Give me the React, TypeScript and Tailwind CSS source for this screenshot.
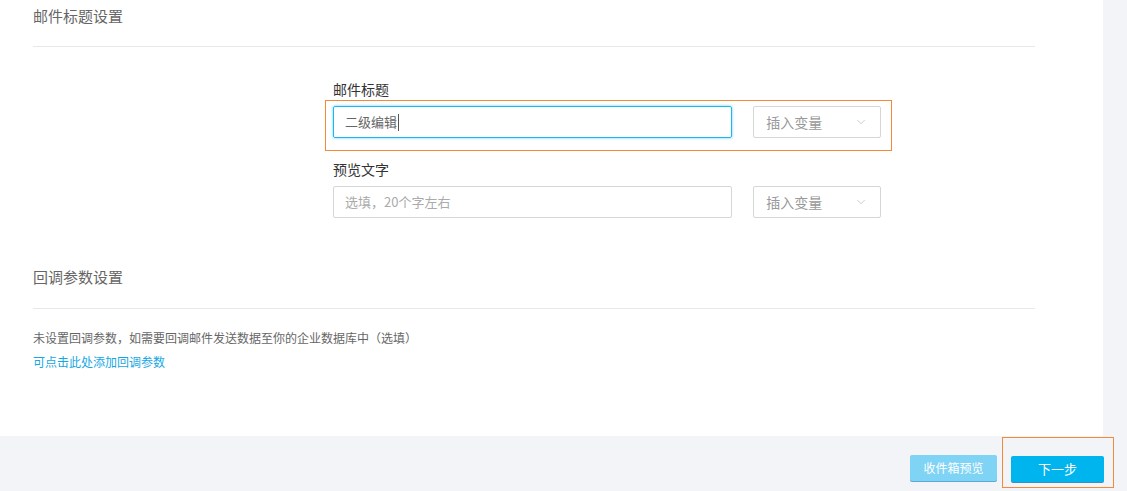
import { ChevronDown } from 'lucide-react';

const font = { fontFamily: '"Noto Sans CJK SC", "Liberation Sans", sans-serif' };

function VarSelect() {
  return (
    <div className="flex h-[32px] w-[128px] items-center justify-between rounded-[2px] border border-[#d6d6d6] bg-white pl-[12px] pr-[12px] text-[14px] text-[#999]">
      <span>插入变量</span>
      <ChevronDown size={14} strokeWidth={1.5} className="text-[#c8c8c8]" />
    </div>
  );
}

export default function App() {
  return (
    <div className="flex h-[491px] w-full flex-col bg-[#f3f4f8]" style={font}>
      <div className="flex">
        <div className="h-[436px] w-[1103px] bg-white pl-[33px] pr-[68px] pt-[6px]">
          <div className="h-[20px] text-[15px] leading-[20px] text-[#666]">邮件标题设置</div>
          <div className="mt-[20px] h-px bg-[#e8e8e8]" />

          <div className="ml-[300px]">
            <div className="mt-[33px] h-[18px] text-[14px] leading-[18px] text-[#333]">邮件标题</div>
            <div className="relative mt-[8px] flex w-[548px] gap-[21px]">
              <div className="flex h-[32px] w-[400px] items-center rounded-[2px] border border-[#1fb6f0] px-[11px] text-[13px] text-[#666] shadow-[0_0_3px_#5fd0ff]">
                <span>二级编辑</span>
                <span className="ml-px h-[17px] w-px bg-[#555]" />
              </div>
              <VarSelect />
              <div className="pointer-events-none absolute -bottom-[13px] -left-[8px] -right-[11px] -top-[6px] border border-[#f5893a]" />
            </div>

            <div className="mt-[22px] h-[18px] text-[14px] leading-[18px] text-[#333]">预览文字</div>
            <div className="mt-[8px] flex w-[548px] gap-[21px]">
              <div className="flex h-[32px] w-[400px] items-center rounded-[2px] border border-[#d6d6d6] px-[11px] text-[13px] text-[#aaa]">
                选填，20个字左右
              </div>
              <VarSelect />
            </div>
          </div>

          <div className="mt-[49px] h-[20px] text-[15px] leading-[20px] text-[#666]">回调参数设置</div>
          <div className="mt-[21px] h-px bg-[#e8e8e8]" />
          <div className="mt-[20px] h-[18px] text-[12px] leading-[18px] text-[#666]">
            未设置回调参数，如需要回调邮件发送数据至你的企业数据库中（选填）
          </div>
          <div className="mt-[6px] h-[18px] text-[12px] leading-[18px] text-[#16a7e3]">可点击此处添加回调参数</div>
        </div>
        <div className="flex-1" />
      </div>

      <div className="flex justify-end gap-[14px] pr-[23px] pt-[19px]">
        <button className="h-[26px] w-[87px] rounded-[2px] bg-[#7fd3f5] text-[12px] text-white shadow-[0_1px_0_#5aa9d6]">
          收件箱预览
        </button>
        <div className="relative">
          <button className="h-[26px] w-[93px] rounded-[2px] bg-[#00b4ee] text-[13px] text-white shadow-[0_1px_0_#3c8fc4]">
            下一步
          </button>
          <div className="pointer-events-none absolute -bottom-[6px] -left-[9px] -right-[10px] -top-[18px] border border-[#f5893a]" />
        </div>
      </div>
    </div>
  );
}
